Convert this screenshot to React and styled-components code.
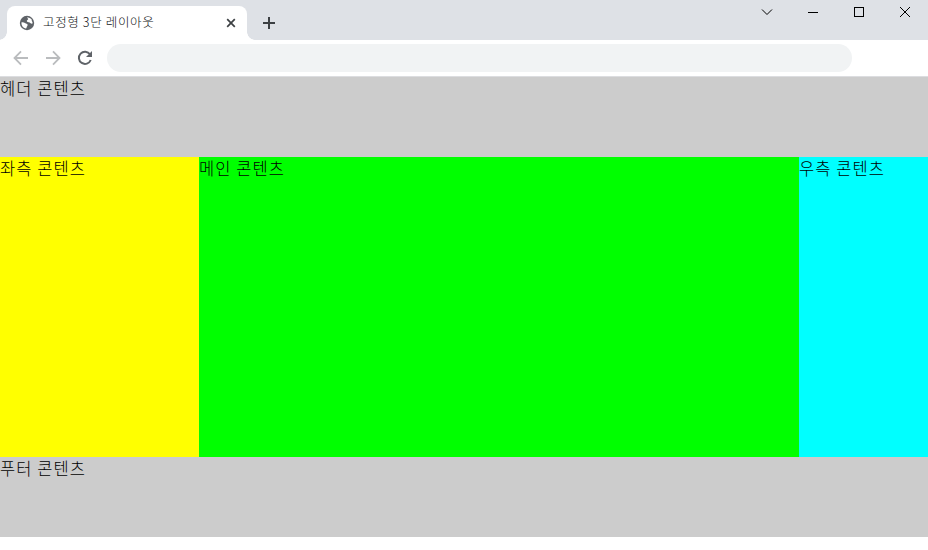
import React from "react";
import styled, { createGlobalStyle } from "styled-components";

const GlobalStyle = createGlobalStyle`
  * { box-sizing: border-box; }
  html, body { margin: 0; background: #fff; overflow: hidden; }
`;

const Browser = styled.div`
  width: 928px;
  height: 550px;
  overflow: hidden;
  background: #fff;
  font-family: "Noto Sans CJK KR", sans-serif;
`;

const TabBar = styled.header`
  display: flex;
  height: 40px;
  padding: 6px 0 0 7px;
  background: #dee1e6;
`;

const Tab = styled.div`
  position: relative;
  display: flex;
  align-items: center;
  width: 240px;
  height: 34px;
  padding: 0 8px 0 12px;
  border-radius: 8px 8px 0 0;
  background: #fff;
  color: #5f6368;

  &::before,
  &::after {
    content: "";
    position: absolute;
    bottom: 0;
    width: 8px;
    height: 8px;
  }
  &::before {
    right: 100%;
    background: radial-gradient(circle at 0 0, transparent 7.5px, #fff 8px);
  }
  &::after {
    left: 100%;
    background: radial-gradient(circle at 100% 0, transparent 7.5px, #fff 8px);
  }
`;

const TabTitle = styled.span`
  flex: 1;
  margin: 0 0 2px 8px;
  color: #101214;
  font-size: 12.5px;
  font-weight: 300;
  line-height: 16px;
  letter-spacing: 0.65px;
  white-space: nowrap;
`;

const IconButton = styled.button`
  display: flex;
  align-items: center;
  justify-content: center;
  width: ${({ $width }) => $width}px;
  height: ${({ $height }) => $height}px;
  padding: 0;
  border: 0;
  background: transparent;
  color: ${({ $color }) => $color || "#3c4043"};
`;

const NewTab = styled(IconButton)`
  margin-left: 8px;
`;

const WindowControls = styled.div`
  display: flex;
  margin: -6px 0 0 auto;
`;

const Toolbar = styled.div`
  display: flex;
  align-items: center;
  height: 37px;
  padding-left: 5px;
  border-bottom: 1px solid #dcdde0;
`;

const AddressBar = styled.div`
  width: 745px;
  height: 28px;
  margin-left: 6px;
  border-radius: 14px;
  background: #f1f3f4;
`;

const Page = styled.main`
  color: #000;
  font-size: 16.5px;
  font-weight: 300;
  line-height: 22px;
  letter-spacing: 1.06px;
  white-space: nowrap;
`;

const Band = styled.section`
  height: 80px;
  background: #ccc;
`;

const Columns = styled.div`
  display: grid;
  grid-template-columns: 199px 600px 129px;
  height: 300px;
`;

const Column = styled.section`
  background: ${({ $color }) => $color};
`;

const GlobeIcon = () => (
  <svg width="16" height="16" viewBox="0 0 16 16">
    <circle cx="8" cy="8" r="7.2" fill="currentColor" />
    <path
      d="M2.4 7.4C3.6 6.8 5 7.4 6 8.1 7 8.8 8.3 8.5 8.6 9.8 8.8 11 7.6 11.4 7.6 12.6 7.6 13.2 7.2 13.5 6.7 13.5 4 12.8 2.2 10.4 2.4 7.4Z"
      fill="#fff"
    />
    <path
      d="M8 2.6C10 2.2 11.7 3.2 12.8 4.8 12.2 5.5 13.7 6.7 13.7 8.3 12.5 9.2 11.5 8.4 10.8 7.5 9.7 7.6 8.1 7.2 7.8 6.1 7.6 5 9.2 4.8 9.2 3.9 9.2 3.2 8 3.5 8 2.6Z"
      fill="#fff"
    />
  </svg>
);

const ArrowIcon = ({ forward }) => (
  <svg width="16" height="16" viewBox="0 0 16 16" fill="none" stroke="currentColor">
    <path
      d={forward ? "M1 8H14M8 1.4 14.5 8 8 14.6" : "M15 8H2M8 1.4 1.5 8 8 14.6"}
      strokeWidth="1.8"
    />
  </svg>
);

const ReloadIcon = () => (
  <svg width="16" height="16" viewBox="0 0 16 16">
    <path
      d="M13 4.3A6.1 6.1 0 1 0 13.7 10"
      fill="none"
      stroke="currentColor"
      strokeWidth="2"
    />
    <path d="M15 1V7H9Z" fill="currentColor" />
  </svg>
);

const CloseTabIcon = () => (
  <svg width="10" height="10" viewBox="0 0 10 10" stroke="currentColor" strokeWidth="1.7">
    <path d="M1.2 1.2 8.8 8.8M8.8 1.2 1.2 8.8" />
  </svg>
);

const PlusIcon = () => (
  <svg width="12" height="12" viewBox="0 0 12 12" fill="currentColor">
    <path d="M5 0h2v5h5v2H7v5H5V7H0V5h5z" />
  </svg>
);

const windowGlyphs = [
  { label: "Search tabs", path: "M1 3.5 6 8.5 11 3.5" },
  { label: "Minimize", path: "M1 6.5H11", crisp: true },
  { label: "Maximize", path: "M1.5 1.5H10.5V10.5H1.5Z", crisp: true },
  { label: "Close", path: "M1 1 11 11M11 1 1 11" },
];

export default function App() {
  return (
    <>
      <GlobalStyle />
      <Browser>
        <TabBar>
          <Tab>
            <GlobeIcon />
            <TabTitle>고정형 3단 레이아웃</TabTitle>
            <IconButton aria-label="Close tab" $width={16} $height={16}>
              <CloseTabIcon />
            </IconButton>
          </Tab>
          <NewTab aria-label="New tab" $width={28} $height={34}>
            <PlusIcon />
          </NewTab>
          <WindowControls>
            {windowGlyphs.map(({ label, path, crisp }) => (
              <IconButton key={label} aria-label={label} $width={46} $height={24} $color="#000">
                <svg
                  width="12"
                  height="12"
                  viewBox="0 0 12 12"
                  fill="none"
                  stroke="currentColor"
                  shapeRendering={crisp ? "crispEdges" : "auto"}
                >
                  <path d={path} />
                </svg>
              </IconButton>
            ))}
          </WindowControls>
        </TabBar>
        <Toolbar>
          <IconButton aria-label="Back" $width={32} $height={32} $color="#babcbe">
            <ArrowIcon />
          </IconButton>
          <IconButton aria-label="Forward" $width={32} $height={32} $color="#babcbe">
            <ArrowIcon forward />
          </IconButton>
          <IconButton aria-label="Reload" $width={32} $height={32} $color="#5f6368">
            <ReloadIcon />
          </IconButton>
          <AddressBar />
        </Toolbar>
        <Page>
          <Band>헤더 콘텐츠</Band>
          <Columns>
            <Column $color="#ff0">좌측 콘텐츠</Column>
            <Column $color="#0f0">메인 콘텐츠</Column>
            <Column $color="#0ff">우측 콘텐츠</Column>
          </Columns>
          <Band>푸터 콘텐츠</Band>
        </Page>
      </Browser>
    </>
  );
}
